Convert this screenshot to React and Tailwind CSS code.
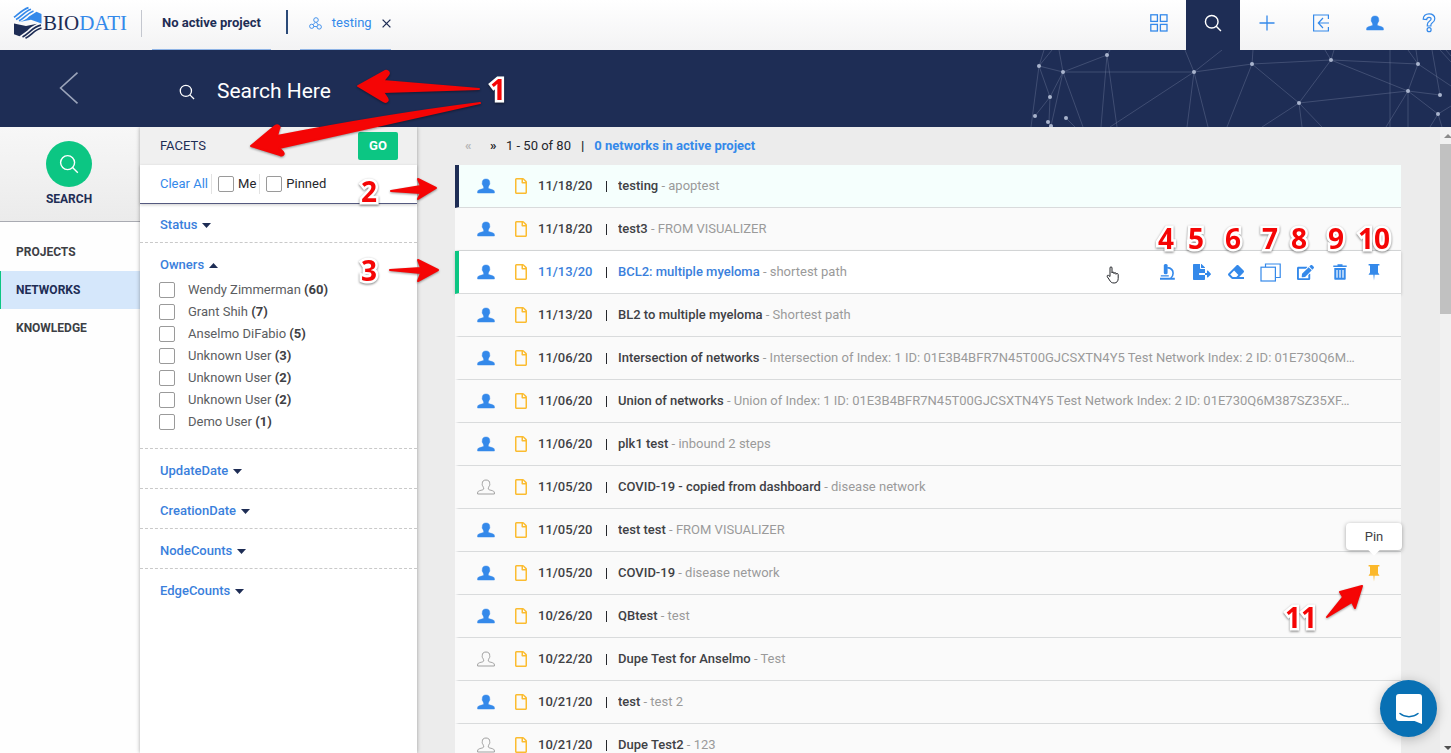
import React from "react";
import { FaFileExport, FaEraser, FaEdit, FaRegFile } from "react-icons/fa";

const NETWORKS = [
  { date: "11/18/20", name: "testing", note: "apoptest", mine: true, state: "open" },
  { date: "11/18/20", name: "test3", note: "FROM VISUALIZER", mine: true },
  { date: "11/13/20", name: "BCL2: multiple myeloma", note: "shortest path", mine: true, state: "hover" },
  { date: "11/13/20", name: "BL2 to multiple myeloma", note: "Shortest path", mine: true },
  {
    date: "11/06/20",
    name: "Intersection of networks",
    note: "Intersection of Index: 1 ID: 01E3B4BFR7N45T00GJCSXTN4Y5 Test Network Index: 2 ID: 01E730Q6M…",
    mine: true,
  },
  {
    date: "11/06/20",
    name: "Union of networks",
    note: "Union of Index: 1 ID: 01E3B4BFR7N45T00GJCSXTN4Y5 Test Network Index: 2 ID: 01E730Q6M387SZ35XF…",
    mine: true,
  },
  { date: "11/06/20", name: "plk1 test", note: "inbound 2 steps", mine: true },
  { date: "11/05/20", name: "COVID-19 - copied from dashboard", note: "disease network", mine: false },
  { date: "11/05/20", name: "test test", note: "FROM VISUALIZER", mine: true },
  { date: "11/05/20", name: "COVID-19", note: "disease network", mine: true, pinned: true },
  { date: "10/26/20", name: "QBtest", note: "test", mine: true },
  { date: "10/22/20", name: "Dupe Test for Anselmo", note: "Test", mine: false },
  { date: "10/21/20", name: "test", note: "test 2", mine: true },
  { date: "10/21/20", name: "Dupe Test2", note: "123", mine: false },
];

const OWNERS = [
  ["Wendy Zimmerman", 60],
  ["Grant Shih", 7],
  ["Anselmo DiFabio", 5],
  ["Unknown User", 3],
  ["Unknown User", 2],
  ["Unknown User", 2],
  ["Demo User", 1],
];

/* ---------- icons ---------- */

function SearchIcon({ className, strokeWidth = 1.6 }) {
  return (
    <svg viewBox="0 0 20 20" className={className} fill="none" stroke="currentColor" strokeWidth={strokeWidth} aria-hidden="true">
      <circle cx="8.6" cy="8.6" r="7" />
      <path d="M13.6 13.6 18.8 18.8" />
    </svg>
  );
}

const PERSON =
  "M9 1C6.300 1 5.200 2.500 5.300 4.600c0 .5-.2.7-.1 1.300.1.800.5.900.7 1.300.2.9.5 1.300.8 1.700v1.100c-.4.8-1.500 1-2.800 1.300C1.800 11.900.6 12.200.6 14v1h16.800v-1c0-1.800-1.200-2.100-3.300-2.700-1.300-.3-2.400-.5-2.800-1.300V8.900c.3-.4.6-.8.8-1.700.2-.4.6-.5.7-1.300.1-.6-.1-.8-.1-1.300C12.800 2.500 11.700 1 9 1Z";

function PersonIcon({ outline = false, className }) {
  return (
    <svg viewBox="0 0 18 16" className={className} fill={outline ? "none" : "currentColor"} stroke="currentColor" strokeWidth={outline ? 1 : 0.5} aria-hidden="true">
      <path d={PERSON} />
    </svg>
  );
}

function GridIcon() {
  return (
    <svg viewBox="0 0 18 18" className="size-[18px]" fill="none" stroke="currentColor" strokeWidth="1.300" aria-hidden="true">
      <rect x="0.800" y="0.800" width="6.600" height="6.600" />
      <rect x="10.400" y="0.800" width="6.600" height="6.600" />
      <rect x="0.800" y="10.400" width="6.600" height="6.600" />
      <rect x="10.400" y="10.400" width="6.600" height="6.600" />
    </svg>
  );
}

function PlusIcon() {
  return (
    <svg viewBox="0 0 16 16" className="size-4" fill="none" stroke="currentColor" strokeWidth="1.300" aria-hidden="true">
      <path d="M8 .5v15M.5 8h15" />
    </svg>
  );
}

function ImportIcon() {
  return (
    <svg viewBox="0 0 18 18" className="size-[18px]" fill="none" stroke="currentColor" strokeWidth="1.200" aria-hidden="true">
      <path d="M16.400 5V1H1.600v16h14.800v-4M17 9H6.500M11 4 6.300 9l4.700 5" />
    </svg>
  );
}

function HelpIcon() {
  return (
    <svg viewBox="0 0 14 20" className="h-[20px] w-[14px]" fill="none" stroke="currentColor" strokeWidth="1.200" aria-hidden="true">
      <path d="M1.200 6.200C1.200 2.800 3.600.9 7 .9c3.400 0 5.800 1.900 5.800 4.900 0 2.500-1.500 3.500-2.700 4.300-1 .7-1.200 1.100-1.200 2v.900H5.300v-1.200c0-1.900 1-2.800 2.300-3.700 1-.7 1.500-1.100 1.500-2.100S8.300 4.400 7 4.400c-1.400 0-2.200.7-2.300 2.100Z" />
      <circle cx="7.100" cy="16.700" r="2" />
    </svg>
  );
}

function MoleculeIcon() {
  return (
    <svg viewBox="0 0 13 13" className="size-[13px]" fill="none" stroke="currentColor" strokeWidth="0.900" aria-hidden="true">
      <circle cx="7" cy="3" r="2.300" />
      <circle cx="2.700" cy="9.300" r="2.100" />
      <circle cx="10.200" cy="9.900" r="2.200" />
      <path d="M6.300 5.200 4.100 7.700M7.400 5.300 9.200 7.900M4.800 9.400 8 9.700" />
    </svg>
  );
}

function MicroscopeIcon() {
  return (
    <svg viewBox="0 0 16 16" className="size-4" fill="currentColor" aria-hidden="true">
      <rect x="4.800" y="0" width="3.800" height="10.200" rx="1.500" />
      <path d="M1 13.800h14.800v2H1zM1.800 11.200h8v1.200h-8z" />
      <path d="M8.200 3.600c3.600.3 5.900 2.500 5.900 5.700 0 2.200-.9 3.700-2.300 4.800" fill="none" stroke="currentColor" strokeWidth="1.600" />
    </svg>
  );
}

function CloneIcon() {
  return (
    <svg viewBox="0 0 21 19" className="h-[19px] w-[21px] shrink-0" fill="none" stroke="currentColor" strokeWidth="1.200" aria-hidden="true">
      <path d="M5.500 4V1h14.700v13.500H15.500" />
      <rect x="1" y="4.200" width="14.400" height="13.800" />
    </svg>
  );
}

function TrashIcon() {
  return (
    <svg viewBox="0 0 14 16" className="h-4 w-[14px]" fill="currentColor" aria-hidden="true">
      <path d="M4.500 1.600V.3h5v1.300h4.200v1.500H.3V1.600z" />
      <path fillRule="evenodd" d="M1.300 4h11.400v10.700c0 .7-.4 1.100-1.100 1.100H2.400c-.7 0-1.100-.4-1.100-1.100zM3.400 6v7.800h1.200V6zm3 0v7.800h1.200V6zm3 0v7.800h1.200V6z" />
    </svg>
  );
}

function PinIcon() {
  return (
    <svg viewBox="0 0 12 18" className="h-[18px] w-3" fill="currentColor" aria-hidden="true">
      <path d="M.6 1h10.800v1.600H10v7l1.500 2.100H6.600L6 17.500l-.6-5.800H.5L2 9.600v-7H.6z" />
    </svg>
  );
}

function Logo() {
  return (
    <a href="#home" className="flex shrink-0 items-center" aria-label="Biodati home">
      <svg viewBox="0 0 30 34" className="h-[34px] w-[30px]" fill="none" aria-hidden="true">
        <path d="M1 11.300C4.500 9 8.500 4 15.500 1.600" stroke="#3489ea" strokeWidth="1.700" />
        <path d="M3 13.500C8 11.500 11 5.500 18 3.300" stroke="#3489ea" strokeWidth="1.700" />
        <path d="M6 14.800C11 12.500 14 7.500 20.500 5" stroke="#3489ea" strokeWidth="1.500" />
        <path d="M16 10.500 23.500 5.800 28.500 8V17.500L18 13.800 5 16.200C10 15.400 13.500 13.200 16 10.500Z" fill="#3489ea" />
        <path d="M1 17.500 13 20 24 17.800C19.500 20 16.500 22 14.500 24.500L6.500 30.300 1 28.200Z" fill="#1e2d55" />
        <path d="M28 19.200C20 20.500 16.500 27.500 9.500 31" stroke="#1e2d55" strokeWidth="1.700" />
        <path d="M28.500 22C21.500 23.500 18.500 29.500 12.500 32.300" stroke="#1e2d55" strokeWidth="1.700" />
      </svg>
      <span className="font-['Liberation_Serif',serif] text-[21px] leading-none text-[#1e2d55]">
        BIO<span className="text-[#3489ea]">DATI</span>
      </span>
    </a>
  );
}

/* ---------- header ---------- */

function NavButton({ label, active, children }) {
  return (
    <button
      aria-label={label}
      className={
        active
          ? "flex h-full w-[54px] items-center justify-center bg-[#1e2d55] pb-1 text-white"
          : "flex h-full w-[54px] items-center justify-center pb-1 text-[#3489ea]"
      }
    >
      {children}
    </button>
  );
}

function TopBar() {
  return (
    <header className="flex h-[50px] shrink-0 items-stretch justify-between overflow-hidden bg-linear-to-b from-white to-[#f3f3f4] pl-[13px]">
      <div className="flex h-full items-center">
        <div className="w-32 pb-1">
          <Logo />
        </div>
        <span className="mb-1 h-[27px] w-px bg-[#c4c7cf]" />
        <button className="ml-[10px] h-full border-b border-[#8fb4e6] px-[10px] pb-[3px] text-[13px] font-bold text-[#1e2d55]">
          No active project
        </button>
        <span className="mr-3 ml-[15px] mb-[7px] h-6 w-[2px] bg-[#2b4a78]" />
        <div className="flex h-full items-center border-b border-[#8fb4e6] pb-[3px] pl-[9px]">
          <a href="#testing" className="flex items-center gap-[10px] text-[13px] text-[#3489ea]">
            <MoleculeIcon />
            testing
          </a>
          <button aria-label="Close testing" className="ml-[10px] text-[#1e2d55]">
            <svg viewBox="0 0 9 9" className="size-[9px]" fill="none" stroke="currentColor" strokeWidth="1.300" aria-hidden="true">
              <path d="m.6.6 7.800 7.800M8.400.6.6 8.400" />
            </svg>
          </button>
        </div>
      </div>
      <nav className="-mr-[5px] flex h-full">
        <NavButton label="Dashboard">
          <GridIcon />
        </NavButton>
        <NavButton label="Search" active>
          <SearchIcon className="size-[18px]" />
        </NavButton>
        <NavButton label="Add">
          <PlusIcon />
        </NavButton>
        <NavButton label="Import">
          <ImportIcon />
        </NavButton>
        <NavButton label="Account">
          <PersonIcon className="h-4 w-[18px]" />
        </NavButton>
        <NavButton label="Help">
          <HelpIcon />
        </NavButton>
      </nav>
    </header>
  );
}

const MESH_DOTS = [
  [39, 16], [63, 22], [107, 5], [50, 47], [35, 66], [48, 72], [51, 76], [66, 68], [194, 22],
  [252, 14], [331, 10], [299, 53], [418, 14], [408, 41], [440, 45], [438, 64],
];

const MESH_LINES =
  "M39 16 63 22 107 5M63 22H194L252 14 331 10 418 14M39 16 44 0M39 16 52 0M63 22 59 0M39 16 31 77M39 16 50 47 35 66M63 22 50 47 49 72M63 22 51 76M63 22 83 77M107 5 101 77M107 5 117 77M107 5 110 0M194 22 185 0M194 22 222 0M194 22 110 77M194 22 187 77M194 22 208 77M252 14 253 0M252 14 227 77M252 14 299 53 331 10 325 0M331 10 334 0M331 10 408 41 440 45M299 53 408 41M299 53 262 77M299 53 302 77M299 53 322 77M390 0V77M408 41 418 14 408 0M418 14 416 0M418 14 451 36M408 41 386 77M408 41V77M408 41 438 64 430 77M438 64 451 56M440 45 432 0M438 64 442 77M440 0 451 12M446 0 451 6M66 68 75 77M48 72 51 76";

function SearchBanner() {
  return (
    <div className="relative h-[77px] shrink-0 overflow-hidden bg-[#1e2d55]">
      <svg viewBox="0 0 451 77" className="absolute top-0 right-0 h-[77px] w-[451px]" fill="none" aria-hidden="true">
        <path d={MESH_LINES} stroke="#8f98b5" strokeOpacity="0.300" />
        {MESH_DOTS.map(([x, y]) => (
          <circle key={`${x}-${y}`} cx={x} cy={y} r="2" fill="#a9b4cd" />
        ))}
      </svg>
      <div className="relative flex h-full items-center pb-px">
        <button aria-label="Back" className="mr-[100px] ml-[59px] text-[#9ba4ba]">
          <svg viewBox="0 0 20 32" className="h-8 w-5" fill="none" stroke="currentColor" strokeWidth="1.600" aria-hidden="true">
            <path d="M18.500.6 1.600 16l16.900 15.400" />
          </svg>
        </button>
        <label className="flex flex-1 items-center gap-[22px] pt-[7px] text-white">
          <SearchIcon className="size-4" />
          <input
            type="search"
            aria-label="Search networks"
            placeholder="Search Here"
            className="w-96 bg-transparent text-[21px] outline-none placeholder:text-white"
          />
        </label>
      </div>
    </div>
  );
}

/* ---------- left column ---------- */

function SideNav() {
  return (
    <aside className="flex w-[140px] shrink-0 flex-col bg-[#fefefe]">
      <div className="flex h-[95px] flex-col items-center border-b border-[#a9abb2] bg-linear-to-b from-[#f7f7f7] to-[#ebebeb] pt-[14px] pr-[2px]">
        <span className="flex size-[46px] items-center justify-center rounded-full bg-[#0cc683] text-white">
          <SearchIcon className="size-5" strokeWidth={1.400} />
        </span>
        <span className="text-[12px] leading-6 font-bold text-[#1e2d55]">SEARCH</span>
      </div>
      <nav className="flex flex-col pt-[11px] text-[12px] font-bold text-[#3d3f45]">
        <a href="#projects" className="flex h-[38px] items-center pl-4">PROJECTS</a>
        <a href="#networks" className="flex h-[38px] items-center border-l border-[#0cc683] bg-[#d5e7fb] pl-[15px] text-[#1e2d55]">NETWORKS</a>
        <a href="#knowledge" className="flex h-[38px] items-center pl-4">KNOWLEDGE</a>
      </nav>
    </aside>
  );
}

function Box() {
  return <input type="checkbox" className="size-4 shrink-0 appearance-none rounded-xs border border-[#9a9a9a] bg-white checked:bg-[#3489ea]" />;
}

function Caret({ up }) {
  return (
    <svg viewBox="0 0 9 5" className="h-[5px] w-[9px] fill-[#1e2d55]" aria-hidden="true">
      <path d={up ? "M0 5 4.500 0 9 5Z" : "M0 0H9L4.500 5Z"} />
    </svg>
  );
}

function FacetTitle({ name, open }) {
  return (
    <button className="flex items-center gap-[5px] text-[13px] leading-[22px] font-medium text-[#3a80dc]" aria-expanded={Boolean(open)}>
      {name}
      <Caret up={open} />
    </button>
  );
}

function Facets() {
  return (
    <section className="z-10 flex w-[277px] shrink-0 flex-col bg-white shadow-[0_0_4px_rgba(0,0,0,0.350)]">
      <div className="flex h-[38px] shrink-0 items-center justify-between bg-[#f0f0f0] pr-[19px] pl-5">
        <h2 className="text-[13px] text-[#1e2d55]">FACETS</h2>
        <button className="h-7 w-10 rounded-xs bg-[#0cc683] text-[13px] font-bold text-white">GO</button>
      </div>
      <div className="flex h-[39px] shrink-0 items-center border-b border-[#54597f] pl-5 text-[13px] text-[#24262b] shadow-[0_1px_3px_rgba(0,0,0,0.200)]">
        <button className="text-[#3489ea]">Clear All</button>
        <label className="ml-[3px] flex h-5 items-center gap-1 border-l border-[#e2e2e2] pl-[6px]">
          <Box />
          Me
        </label>
        <label className="ml-[3px] flex h-5 items-center gap-1 border-l border-[#e2e2e2] pl-[6px]">
          <Box />
          Pinned
        </label>
      </div>
      <div className="flex h-[39px] items-center border-b border-dashed border-[#c9c9c9] pt-1 pl-5">
        <FacetTitle name="Status" />
      </div>
      <div className="border-b border-dashed border-[#c9c9c9] pt-[11px] pb-[15px] pl-[19px]">
        <div className="pl-px">
          <FacetTitle name="Owners" open />
        </div>
        <ul className="mt-[3px] text-[13px] text-[#5b5d61]">
          {OWNERS.map(([name, count], i) => (
            <li key={i}>
              <label className="flex h-[22px] items-center gap-[13px]">
                <Box />
                <span>
                  {name} <b className="text-[#3f4145]">({count})</b>
                </span>
              </label>
            </li>
          ))}
        </ul>
      </div>
      {["UpdateDate", "CreationDate", "NodeCounts", "EdgeCounts"].map((name) => (
        <div key={name} className="flex h-10 items-center border-b border-dashed border-[#c9c9c9] pt-[5px] pl-5 last:border-transparent">
          <FacetTitle name={name} />
        </div>
      ))}
    </section>
  );
}

/* ---------- results ---------- */

function RowActions() {
  const actions = [
    ["Visualize", <MicroscopeIcon />],
    ["Export", <FaFileExport className="size-[18px] shrink-0" />],
    ["Clear", <FaEraser className="size-4" />],
    ["Duplicate", <CloneIcon />],
    ["Edit", <FaEdit className="size-[17px]" />],
    ["Delete", <TrashIcon />],
    ["Pin", <PinIcon />],
  ];
  return (
    <div className="flex w-[225px] shrink-0 items-center justify-between text-[#3489ea]">
      {actions.map(([label, icon]) => (
        <button key={label} aria-label={label} className="flex w-[18px] items-center justify-center">
          {icon}
        </button>
      ))}
    </div>
  );
}

function NetworkRow({ date, name, note, mine, state, pinned }) {
  const tone =
    state === "open"
      ? "border-l-[#1e2d55] bg-[#f5fffd]"
      : state === "hover"
        ? "border-l-[#0cc683] bg-white shadow-[0_1px_3px_rgba(0,0,0,0.200)]"
        : "border-l-[#fafafa] bg-[#fafafa]";
  const ink = state === "hover" ? "text-[#3a80dc]" : "text-[#3f4145]";
  return (
    <li className={`flex h-[43px] items-center border-b border-l-4 border-b-[#d9dbdc] pr-[18px] pl-[18px] text-[13px] ${tone}`}>
      <PersonIcon outline={!mine} className={mine ? "h-4 w-[18px] shrink-0 text-[#3489ea]" : "h-4 w-[18px] shrink-0 text-[#a0a0a0]"} />
      <FaRegFile className="mr-[9px] ml-[18px] h-4 w-[16px] shrink-0 text-[#fbbc30]" />
      <time className={`w-[68px] shrink-0 font-medium ${ink}`}>{date}</time>
      <span className="mr-[11px] h-[11px] w-px shrink-0 bg-[#24262b]" />
      <p className="min-w-0 flex-1 truncate text-[#9a9a9a]">
        <a href="#network" className={`font-medium ${ink}`}>{name}</a> - {note}
      </p>
      {state === "hover" && <RowActions />}
      {pinned && (
        <div className="relative flex">
          <button aria-label="Unpin" className="flex w-[18px] justify-center text-[#fbb82a]">
            <PinIcon />
          </button>
          <div role="tooltip" className="absolute bottom-8 left-1/2 flex h-[27px] w-14 -translate-x-1/2 items-center justify-center rounded-sm bg-white text-[13px] text-[#3f4145] shadow-[0_1px_4px_rgba(0,0,0,0.350)]">
            Pin
            <span className="absolute -bottom-1 size-2 rotate-45 bg-white" />
          </div>
        </div>
      )}
    </li>
  );
}

function Results() {
  return (
    <main className="flex min-w-0 flex-1 flex-col bg-[#ececec] pr-[50px] pl-[38px]">
      <div className="flex h-[38px] shrink-0 items-center pl-[10px] text-[13px] text-[#24262b]">
        <button aria-label="Previous page" className="w-[25px] text-left font-bold text-[#b5b5b5]">«</button>
        <button aria-label="Next page" className="mr-2 w-[8px] text-left font-bold">»</button>
        <span>1 - 50 of 80</span>
        <span className="mx-[10px] font-bold">|</span>
        <a href="#project" className="font-bold text-[#3489ea]">0 networks in active project</a>
      </div>
      <ul className="min-h-0 flex-1">
        {NETWORKS.map((n, i) => (
          <NetworkRow key={i} {...n} />
        ))}
      </ul>
    </main>
  );
}

function ScrollTrack() {
  return (
    <div className="absolute inset-y-0 right-0 flex w-[11px] flex-col bg-[#f1f1f1]" aria-hidden="true">
      <svg viewBox="0 0 11 17" className="h-[17px] w-[11px] fill-[#8b8b8b]">
        <path d="M4 11 8 7l4 4Z" />
      </svg>
      <div className="h-[170px] bg-[#c1c1c1]" />
      <svg viewBox="0 0 11 17" className="mt-auto h-[17px] w-[11px] fill-[#505050]">
        <path d="M4 10h8l-4 4Z" />
      </svg>
    </div>
  );
}

/* ---------- callouts ---------- */

const LEFT_MARKS = [
  ["1", "left-[498px] top-[89px]"],
  ["2", "left-[369px] top-[191px]"],
  ["3", "left-[369px] top-[270px]"],
];

const RIGHT_MARKS = [
  ["4", "right-[285px] top-[238px]"],
  ["5", "right-[255px] top-[238px]"],
  ["6", "right-[218px] top-[238px]"],
  ["7", "right-[181px] top-[238px]"],
  ["8", "right-[152px] top-[238px]"],
  ["9", "right-[115px] top-[238px]"],
  ["10", "right-[77px] top-[238px]"],
  ["11", "right-[150px] top-[617px]"],
];

const MARK =
  "absolute -translate-y-1/2 font-['Open_Sans',sans-serif] text-[28px] leading-none font-bold text-[#f50505] [-webkit-text-stroke:5px_white] [paint-order:stroke_fill] drop-shadow-[0_1px_1px_rgba(0,0,0,0.500)]";

function Callouts() {
  return (
    <div className="pointer-events-none absolute inset-0 z-20 overflow-hidden">
      <svg viewBox="0 0 500 300" className="absolute top-0 left-0 h-[300px] w-[500px] drop-shadow-[0_1px_1px_rgba(0,0,0,0.400)]" fill="#f50505" stroke="#f50505" strokeWidth="2" strokeLinejoin="round" aria-hidden="true">
        <path d="M358 86 385 71C388 70 390 73 388 75L383 81 479 89 383 92 387 98C389 101 386 103 383 101Z" />
        <path d="M251 146 275 126C278 124 281 127 279 129L277 136Q385 115 480 103 385 124 279 148L283 152C285 155 282 156 280 155Z" />
        <path d="M436 188 418 179 421 186 391 191 421 193 418 199Z" />
        <path d="M438 270 418 260 421 268 390 270 421 273 418 281Z" />
      </svg>
      <svg viewBox="0 0 50 50" className="absolute top-[577px] right-[83px] size-[50px] drop-shadow-[0_1px_1px_rgba(0,0,0,0.400)]" fill="#f50505" stroke="#f50505" strokeWidth="2" strokeLinejoin="round" aria-hidden="true">
        <path d="M44 9 22 15 25 20 9 40 34 25 37 31Z" />
      </svg>
      {LEFT_MARKS.map(([n, place]) => (
        <span key={n} className={`${MARK} -translate-x-1/2 ${place}`}>{n}</span>
      ))}
      {RIGHT_MARKS.map(([n, place]) => (
        <span key={n} className={`${MARK} translate-x-1/2 ${place}`}>{n}</span>
      ))}
      <svg viewBox="0 0 14 18" className="absolute top-[266px] right-[331px] h-[18px] w-[14px]" fill="white" stroke="#24262b" strokeLinejoin="round" aria-hidden="true">
        <path d="M4 10.500V2c0-1.600 2-1.600 2 0v5c0-1.300 2-1.300 2 0v.6c0-1.300 2-1.300 2 0v.7c0-1.200 2.200-1.200 2.200.3v3.900c0 2.500-1.400 4.500-4 4.500-2.500 0-3.700-1-4.700-3L1.300 10.800c-.6-1.500.8-2 1.500-1.200Z" />
      </svg>
    </div>
  );
}

export default function App() {
  return (
    <div className="relative flex h-screen flex-col overflow-hidden bg-white font-[Roboto,sans-serif]">
      <TopBar />
      <SearchBanner />
      <div className="relative flex min-h-0 flex-1 overflow-hidden">
        <SideNav />
        <Facets />
        <Results />
        <ScrollTrack />
      </div>
      <Callouts />
      <button aria-label="Open chat" className="absolute right-[14px] bottom-4 z-30 flex size-[57px] items-center justify-center rounded-full bg-[#0870b4] text-white shadow-[0_2px_12px_rgba(0,0,0,0.250)]">
        <svg viewBox="0 0 26 31" className="h-[31px] w-[26px]" aria-hidden="true">
          <path d="M3 1h20a3 3 0 0 1 3 3v27l-7.500-3H3a3 3 0 0 1-3-3V4a3 3 0 0 1 3-3Z" fill="currentColor" />
          <path d="M4 20.500c5 4.200 13 4.200 18 0" fill="none" stroke="#0870b4" strokeWidth="1.500" strokeLinecap="round" />
        </svg>
      </button>
    </div>
  );
}
